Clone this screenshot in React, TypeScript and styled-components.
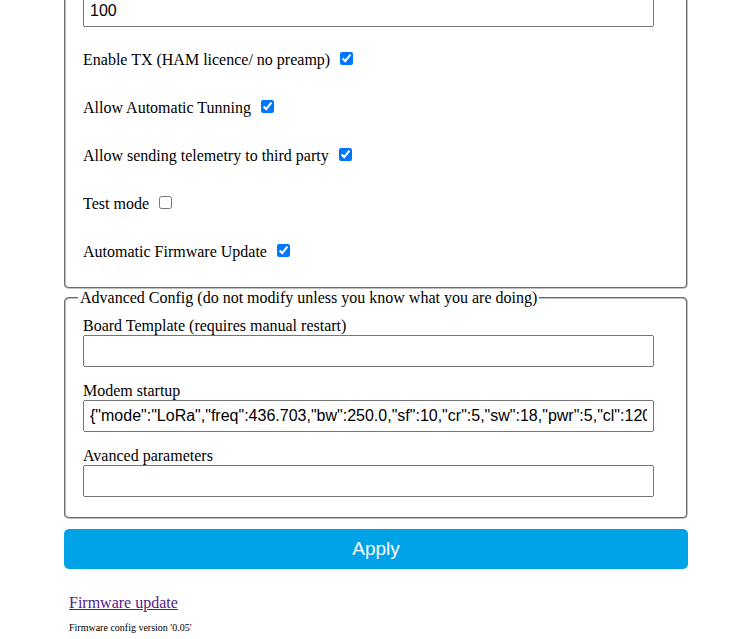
import React, { useState } from "react";
import styled, { createGlobalStyle } from "styled-components";

const GlobalStyle = createGlobalStyle`
  body {
    margin: 0;
    background: #fff;
    color: #000;
    font: 16px/18px "Liberation Serif", serif;
  }
  #root { overflow: hidden; }
`;

const Page = styled.form`
  min-width: 280px;
  margin: 0 57px 0 64px;
`;

const Group = styled.fieldset<{ $continued?: boolean }>`
  box-sizing: border-box;
  min-width: 0;
  margin: 0;
  padding: ${(p) => (p.$continued ? "0 32px 11px 17px" : "10px 32px 20px 17px")};
  border: 2px groove #c0c0c0;
  border-top-width: ${(p) => (p.$continued ? "0" : "2px")};
  border-radius: ${(p) => (p.$continued ? "0 0 5px 5px" : "5px")};
`;

const Legend = styled.legend`
  margin-left: -5px;
  padding: 0 2px;
`;

const Field = styled.div`
  display: flex;
  flex-direction: column;
  & + & { margin-top: 15px; }
`;

const TextBox = styled.input`
  box-sizing: border-box;
  width: 100%;
  height: 32px;
  padding: 5px;
  font: 16px "Liberation Sans", sans-serif;
`;

const ValueBox = styled(TextBox)`
  display: block;
  margin-top: -5px;
`;

const Options = styled.div`
  padding-top: 9px;
`;

const CheckRow = styled.div`
  display: flex;
  align-items: center;
  height: 48px;
`;

const Check = styled.input`
  width: 13px;
  height: 13px;
  margin: 0 0 4px 10px;
`;

const Apply = styled.button`
  display: block;
  width: 100%;
  height: 40px;
  margin-top: 10px;
  border: 0;
  border-radius: 5px;
  background: #00a2e8;
  color: #fff;
  font: 19px "Liberation Sans", sans-serif;
  cursor: pointer;
`;

const Footer = styled.footer`
  padding: 25px 5px 0;
`;

const UpdateLink = styled.a`
  color: #551a8b;
`;

const Version = styled.p`
  margin: 10px 0 0;
  font-size: 10px;
  line-height: 12px;
`;

const options = [
  { id: "tx", label: "Enable TX (HAM licence/ no preamp)", on: true },
  { id: "tuning", label: "Allow Automatic Tunning", on: true },
  { id: "telemetry", label: "Allow sending telemetry to third party", on: true },
  { id: "test", label: "Test mode", on: false },
  { id: "auto-update", label: "Automatic Firmware Update", on: true },
];

const advanced = [
  { id: "board", label: "Board Template (requires manual restart)", value: "" },
  {
    id: "modem",
    label: "Modem startup",
    value:
      '{"mode":"LoRa","freq":436.703,"bw":250.0,"sf":10,"cr":5,"sw":18,"pwr":5,"cl":120,"pl":8,"gain":0,"crc":true,"fldro":1}',
  },
  { id: "params", label: "Avanced parameters", value: "" },
];

export default function App() {
  const [value, setValue] = useState("100");
  return (
    <>
      <GlobalStyle />
      <Page onSubmit={(e) => e.preventDefault()}>
        <Group $continued>
          <ValueBox
            type="text"
            aria-label="Value"
            value={value}
            onChange={(e) => setValue(e.target.value)}
          />
          <Options>
            {options.map((o) => (
              <CheckRow key={o.id}>
                <label htmlFor={o.id}>{o.label}</label>
                <Check type="checkbox" id={o.id} defaultChecked={o.on} />
              </CheckRow>
            ))}
          </Options>
        </Group>
        <Group>
          <Legend>Advanced Config (do not modify unless you know what you are doing)</Legend>
          {advanced.map((f) => (
            <Field key={f.id}>
              <label htmlFor={f.id}>{f.label}</label>
              <TextBox id={f.id} type="text" defaultValue={f.value} />
            </Field>
          ))}
        </Group>
        <Apply type="submit">Apply</Apply>
        <Footer>
          <UpdateLink href="#firmware">Firmware update</UpdateLink>
          <Version>Firmware config version '0.05'</Version>
        </Footer>
      </Page>
    </>
  );
}
